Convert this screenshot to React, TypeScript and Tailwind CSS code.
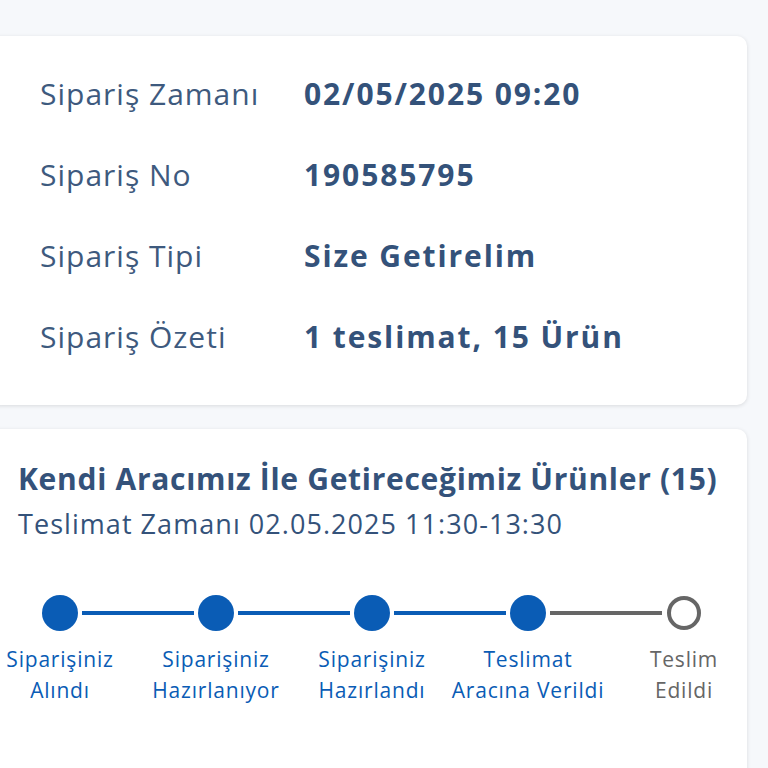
import React from "react";

const INFO = [
  { label: "Sipariş Zamanı", value: "02/05/2025 09:20" },
  { label: "Sipariş No", value: "190585795" },
  { label: "Sipariş Tipi", value: "Size Getirelim" },
  { label: "Sipariş Özeti", value: "1 teslimat, 15 Ürün" },
];

const STEPS = [
  { lines: ["Siparişiniz", "Alındı"], done: true },
  { lines: ["Siparişiniz", "Hazırlanıyor"], done: true },
  { lines: ["Siparişiniz", "Hazırlandı"], done: true },
  { lines: ["Teslimat", "Aracına Verildi"], done: true },
  { lines: ["Teslim", "Edildi"], done: false },
];

export default function App() {
  return (
    <div
      className="min-h-screen w-[768px] overflow-hidden bg-[#f6f8fb] pt-[36px]"
      style={{ fontFamily: "'Open Sans', Lato, sans-serif" }}
    >
      {/* Order info card */}
      <div className="ml-[-10px] w-[757px] rounded-[10px] bg-white shadow-[0_1px_4px_rgba(0,0,0,0.12)] pl-[50px] pt-[38px] pb-[50px]">
        <div className="flex flex-col gap-[43px]">
          {INFO.map((row) => (
            <div key={row.label} className="flex items-center h-[38px]">
              <span className="w-[264px] text-[30px] tracking-[1px] text-[#3e5a7e]">{row.label}</span>
              <span className="text-[30px] font-bold tracking-[1.9px] text-[#34527a]">{row.value}</span>
            </div>
          ))}
        </div>
      </div>

      {/* Delivery card */}
      <div className="mt-[24px] ml-[-10px] w-[757px] h-[400px] rounded-[10px] bg-white shadow-[0_1px_4px_rgba(0,0,0,0.12)] pt-[30px]">
        <div className="pl-[28px]">
          <h2 className="text-[30px] font-bold leading-[40px] tracking-[0.7px] text-[#34527a]">
            Kendi Aracımız İle Getireceğimiz Ürünler (15)
          </h2>
          <p className="mt-[8px] text-[27px] font-medium leading-[34px] tracking-[1.05px] text-[#34527a]">
            Teslimat Zamanı 02.05.2025 11:30-13:30
          </p>
        </div>

        <div className="mt-[54px] ml-[-8px] grid grid-cols-5 w-[780px]">
          {STEPS.map((step, i) => {
            const next = STEPS[i + 1];
            return (
              <div key={i} className="relative flex flex-col items-center">
                <div className="relative h-[36px] flex items-center justify-center">
                  {step.done ? (
                    <div className="w-[36px] h-[36px] rounded-full bg-[#0a5cb5]" />
                  ) : (
                    <div className="w-[34px] h-[34px] rounded-full border-[4px] border-[#666666] bg-white" />
                  )}
                </div>
                {next && (
                  <div
                    className={`absolute top-[16px] left-[calc(50%+22px)] w-[112px] h-[4px] ${
                      next.done ? "bg-[#0a5cb5]" : "bg-[#666666]"
                    }`}
                  />
                )}
                <div
                  className={`mt-[13px] text-center text-[21px] leading-[31px] tracking-[0.8px] whitespace-nowrap ${
                    step.done ? "text-[#0a5cb5]" : "text-[#666666]"
                  }`}
                >
                  {step.lines.map((l) => (
                    <div key={l}>{l}</div>
                  ))}
                </div>
              </div>
            );
          })}
        </div>
      </div>
    </div>
  );
}
